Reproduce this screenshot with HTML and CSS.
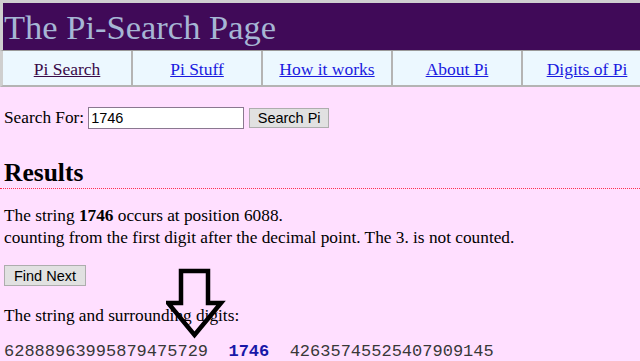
FILE: index.html
```html
<!DOCTYPE html>
<html>
	<head>
		<title>The Pi-Search Page</title>
		<link rel="stylesheet" href="styles.css">
	</head>
	<body>
		<div id="page">
			<div id="title">The Pi-Search Page</div>
			<div id="menu">
				<div class="menu_item"><a class="visited" href="#">Pi Search</a></div>
				<div class="menu_item"><a href="#">Pi Stuff</a></div>
				<div class="menu_item"><a href="#">How it works</a></div>
				<div class="menu_item"><a href="#">About Pi</a></div>
				<div class="menu_item"><a href="#">Digits of Pi</a></div>
			</div>

			<div id="content">
				<form id="search">
					Search For: <input type="text" id="query" value="1746" />
					<input type="button" id="btnSearch" value="Search Pi" />
				</form>

				<h2 id="results">Results</h2>

				<p class="result_text">The string <b>1746</b> occurs at position 6088.<br>
				counting from the first digit after the decimal point. The 3. is not counted.</p>

				<input type="button" id="btnNext" value="Find Next" />

				<p class="result_text" id="surround_label">The string and surrounding digits:</p>

				<div id="digits">62888963995879475729  <span id="found">1746</span>  42635745525407909145</div>
			</div>

			<svg id="arrow" width="60" height="72" viewBox="0 0 60 72">
				<path d="M15 3 H42 V35 H55 L28.5 67 L2 35 H15 Z" fill="none" stroke="#000" stroke-width="4.5" stroke-linejoin="miter" />
			</svg>
		</div>
	</body>
</html>
```
FILE: styles.css
```css
html {background:#ffdfff}
body {margin:0px;overflow:hidden;font-family:"Liberation Serif", "Times New Roman", serif;font-size:17.3px;color:#000}
div#page {width:660px;position:relative}
div#title {background:#400a58;color:#a6b6d4;font-size:34.5px;height:47px;line-height:48px;padding-left:1px;border-top:3px solid #cfcfcf;border-left:3px solid #cfcfcf}
div#menu {display:flex;background:#ecf8ff;border-top:1px solid #9a9a9a;border-bottom:2px solid #b4b4b4;border-left:3px solid #cfcfcf}
div.menu_item {width:128px;height:34px;line-height:37px;text-align:center;border-right:2px solid #b4b4b4;font-size:17.5px}
div.menu_item a {color:#1a1ae0}
div.menu_item a.visited {color:#3a0a48}
div#content {padding:0px 4px}
form#search {margin:20px 0px 0px 0px;height:22px;display:flex;align-items:center}
input#query {width:150px;height:18px;margin:0px 5px 0px 4px;padding:1px 2px;border:1px solid #8a7890;font-family:"Liberation Sans", Arial, sans-serif;font-size:14.5px;background:#fff}
input#btnSearch, input#btnNext {font-family:"Liberation Sans", Arial, sans-serif;font-size:14.5px;background:#e1e1e1;border:1px solid #adadad;color:#000;padding:0px}
input#btnSearch {width:80px;height:20px}
input#btnNext {width:82px;height:21px;display:block;margin:0px}
h2#results {font-size:25.5px;font-weight:bold;margin:29px -4px 0px -4px;padding:0px 4px 0px 4px;line-height:30px;border-bottom:1px dotted #ff3050}
p.result_text {margin:16px 0px 16px 0px;line-height:22px}
p#surround_label {margin:19px 0px 16px 0px}
div#digits {font-family:"Liberation Mono", "Courier New", monospace;font-size:17px;white-space:pre;color:#383838;line-height:17px}
span#found {color:#1818a8;font-weight:bold}
svg#arrow {position:absolute;left:166px;top:268px}
```
